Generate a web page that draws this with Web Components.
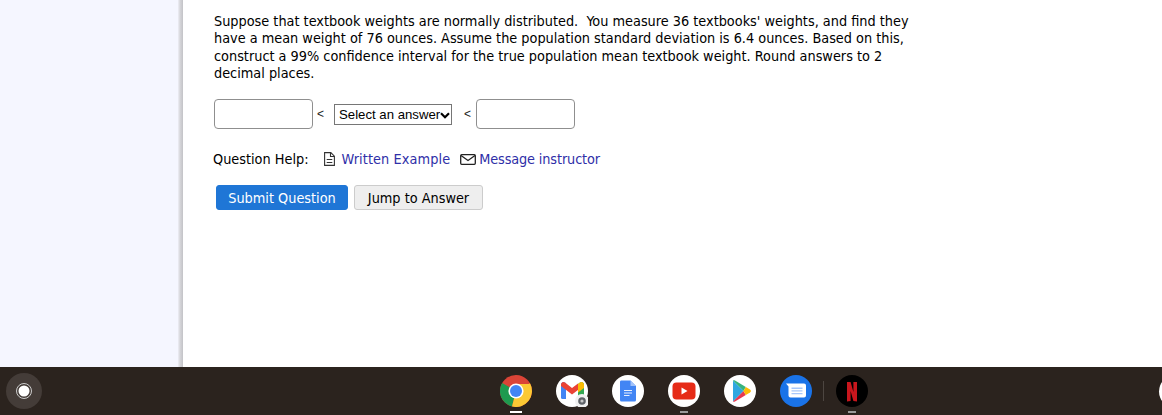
<!DOCTYPE html>
<html lang="en">
<head>
<meta charset="utf-8">
<title>Question</title>
<style>
  html, body { margin: 0; height: 100%; overflow: hidden; }
  body { font-family: "DejaVu Sans", sans-serif; font-stretch: condensed; }
</style>
</head>
<body>
<app-shell>
  <question-panel slot="main">
    <span slot="text">Suppose that textbook weights are normally distributed.&nbsp; You measure 36 textbooks' weights, and find they have a mean weight of 76 ounces. Assume the population standard deviation is 6.4 ounces. Based on this, construct a 99% confidence interval for the true population mean textbook weight. Round answers to 2 decimal places.</span>
  </question-panel>
  <shelf-bar slot="shelf"></shelf-bar>
</app-shell>

<script>
const shellTemplate = document.createElement('template')
shellTemplate.innerHTML = `
<style>
  :host { display: grid; grid-template-rows: 367px 48px; height: 415px; width: 100%; }
  #top { display: grid; grid-template-columns: 178px 5px 1fr; min-height: 0; }
  #side { background: #f5f6ff; }
  #edge { background: linear-gradient(to right, #eeeef6, #d6d6da 40%, #c6c6ca 90%); }
  #content { background: #fff; min-width: 0; }
</style>
<div id="top">
  <div id="side"></div>
  <div id="edge"></div>
  <div id="content"><slot name="main"></slot></div>
</div>
<slot name="shelf"></slot>
`
customElements.define('app-shell', class extends HTMLElement {
  constructor () {
    super()
    this.attachShadow({ mode: 'open' }).appendChild(shellTemplate.content.cloneNode(true))
  }
})

const panelTemplate = document.createElement('template')
panelTemplate.innerHTML = `
<style>
  :host { display: block; padding: 13px 0 0 31px; color: #000; font-size: 14.33px; }
  #text { width: 700px; line-height: 17.3px; }
  #answer { display: flex; align-items: center; margin-top: 17px; font: 12px "Liberation Sans", sans-serif; }
  input {
    box-sizing: border-box; width: 99px; height: 30px; padding: 0 4px; margin: 0;
    border: 1px solid #8f8f8f; border-radius: 4px; background: #fff;
  }
  #pick { position: relative; display: block; width: 118px; height: 21px; }
  select {
    display: block; box-sizing: border-box; width: 118px; height: 21px; margin: 0; padding: 0 0 0 4px;
    font: 13.2px "Liberation Sans", Arial, sans-serif; color: #000;
    background: #fff; border: 1px solid #767676; border-radius: 0; appearance: none;
  }
  #pick svg { position: absolute; left: 106px; top: 8px; pointer-events: none; }
  .lt { box-sizing: border-box; width: 21px; padding-left: 4px; color: #222; }
  .lt.second { width: 24px; padding-left: 12px; }
  #help { display: flex; align-items: center; margin: 21px 0 0 -1px; height: 18px; }
  #help b { font-weight: normal; margin-right: 15px; }
  a { color: #2f2fa8; text-decoration: none; display: flex; align-items: center; }
  #written { margin-right: 10px; letter-spacing: .1px; }
  #written svg { margin-right: 7px; }
  #message { letter-spacing: -.12px; }
  #message svg { margin-right: 3px; }
  #buttons { display: flex; gap: 6px; margin: 17px 0 0 2px; }
  button {
    box-sizing: border-box; height: 25px; margin: 0; padding: 0; border-radius: 3px;
    font: inherit; font-size: 14.33px; font-stretch: condensed;
  }
  #submit { width: 132px; background: #1f76d6; color: #fff; border: 1px solid #1f76d6; }
  #jump { width: 129px; background: #eee; color: #000; border: 1px solid #ccc; }
</style>
<div id="text"><slot name="text"></slot></div>
<div id="answer">
  <input type="text" aria-label="Lower bound">
  <span class="lt">&lt;</span>
  <span id="pick">
    <select aria-label="Parameter"><option>Select an answer</option></select>
    <svg width="10" height="7" viewBox="0 0 10 7" fill="none" stroke="#000" stroke-width="2.2"><path d="M1 1.200l4 4 4-4"/></svg>
  </span>
  <span class="lt second">&lt;</span>
  <input type="text" aria-label="Upper bound">
</div>
<div id="help">
  <b>Question Help:</b>
  <a id="written" href="#">
    <svg width="11" height="14" viewBox="0 0 11 14" fill="none" stroke="#333" stroke-width="1.100">
      <path d="M.6.6h6.200l3.600 3.600v9.200H.6z"/><path d="M6.500.6v3.900h3.900"/><path d="M2.700 7.500h5.600M2.700 10.500h5.600"/>
    </svg>Written Example</a>
  <a id="message" href="#">
    <svg width="16" height="11" viewBox="0 0 16 11" fill="none" stroke="#222" stroke-width="1.300">
      <rect x=".7" y=".7" width="14.600" height="9.600" rx="1"/><path d="M1 1.500l7 5 7-5"/>
    </svg>Message instructor</a>
</div>
<div id="buttons">
  <button id="submit">Submit Question</button>
  <button id="jump">Jump to Answer</button>
</div>
`
customElements.define('question-panel', class extends HTMLElement {
  constructor () {
    super()
    this.attachShadow({ mode: 'open' }).appendChild(panelTemplate.content.cloneNode(true))
  }
})

const shelfTemplate = document.createElement('template')
shelfTemplate.innerHTML = `
<style>
  :host { display: flex; align-items: center; position: relative; height: 48px; background: #2b231e; overflow: hidden; }
  #launcher {
    position: absolute; left: 6px; top: 6px; width: 36px; height: 36px; border-radius: 50%;
    background: #443c38; display: flex; align-items: center; justify-content: center;
  }
  #apps { display: flex; align-items: center; margin-left: 500px; height: 48px; }
  .app { position: relative; width: 32px; height: 32px; margin-right: 24px; flex: none; }
  .app svg { display: block; filter: blur(.3px); }
  .app::after {
    content: ""; position: absolute; left: 12px; bottom: -6px; width: 8px; height: 2px; background: #9a9a9a;
  }
  .app.plain::after { display: none; }
  .app.active::after { left: 10px; width: 12px; background: #fff; }
  #apps .tight { margin-right: 11px; }
  #divider { width: 1px; height: 20px; background: #4d4641; margin-right: 12px; flex: none; }
  #tray {
    position: absolute; right: -30px; top: 8px; width: 33px; height: 33px; border-radius: 50%; background: #fff;
  }
</style>
<div id="launcher">
  <svg width="16" height="16" viewBox="0 0 16 16">
    <circle cx="8" cy="8" r="7.500" fill="none" stroke="#ccc" stroke-width="1"/>
    <circle cx="8" cy="8" r="5.500" fill="#fff"/>
  </svg>
</div>
<div id="apps">
  <div class="app active">
    <svg width="32" height="32" viewBox="0 0 32 32">
      <circle cx="16" cy="16" r="16" fill="#db4437"/>
      <path d="M16 16L2.100 8A16 16 0 0 0 12 31.500z" fill="#1e9a4f"/>
      <path d="M16 16L30 8.300A16 16 0 0 1 12 31.500z" fill="#fcc934"/>
      <path d="M16 9h13.500l1 1.600-14.500 6z" fill="#fcc934"/>
      <circle cx="16" cy="16" r="7.600" fill="#fff"/>
      <circle cx="16" cy="16" r="6" fill="#4285f4"/>
    </svg>
  </div>
  <div class="app plain">
    <svg width="32" height="32" viewBox="0 0 32 32">
      <circle cx="16" cy="16" r="16" fill="#fff"/>
      <path d="M5 9.500A2.500 2.500 0 0 1 9 7.500l1 .8V24H6.600A1.600 1.600 0 0 1 5 22.400z" fill="#4285f4"/>
      <path d="M28 9.500a2.500 2.500 0 0 0-4-2l-2 1.500V24h4.400a1.600 1.600 0 0 0 1.600-1.600z" fill="#34a853"/>
      <path d="M22 9l2-1.500a2.500 2.500 0 0 1 4 2v3.500l-6 4.500z" fill="#fbbc04"/>
      <path d="M5 9.500A2.500 2.500 0 0 1 9 7.500l7 5.500 6-4.500v6.500l-6 4.500-11-8.500z" fill="#ea4335"/>
      <circle cx="26" cy="26" r="7" fill="#f1f1f1"/>
      <circle cx="26" cy="26" r="3.800" fill="#5f6368"/>
      <circle cx="26" cy="26" r="1.600" fill="#c8c8c8"/>
    </svg>
  </div>
  <div class="app plain">
    <svg width="32" height="32" viewBox="0 0 32 32">
      <circle cx="16" cy="16" r="16" fill="#fff"/>
      <path d="M9 5.500h9.500l5.500 5.500v14a1.500 1.500 0 0 1-1.500 1.500h-13A1.500 1.500 0 0 1 8 25V7a1.500 1.500 0 0 1 1-1.500z" fill="#4285f4"/>
      <path d="M18.500 5.500L24 11h-5.500z" fill="#a1c2fa"/>
      <path d="M12 15h8v1h-8zM12 17.500h8v1h-8zM12 20h5.500v1H12z" fill="#e8f0fe"/>
    </svg>
  </div>
  <div class="app">
    <svg width="32" height="32" viewBox="0 0 32 32">
      <circle cx="16" cy="16" r="16" fill="#fff"/>
      <rect x="4.500" y="7.500" width="23" height="17" rx="4" fill="#e62b17"/>
      <path d="M13.500 12.500v7l6-3.500z" fill="#fff"/>
    </svg>
  </div>
  <div class="app plain">
    <svg width="32" height="32" viewBox="0 0 32 32">
      <circle cx="16" cy="16" r="16" fill="#fff"/>
      <path d="M9 5.500v21L19.500 16z" fill="#2fa7e0"/>
      <path d="M9 5.500c.5-.4 1.200-.3 2 .1L21.800 12l-2.300 4z" fill="#36b37e"/>
      <path d="M9 26.500c.5.4 1.200.3 2-.1L21.800 20l-2.300-4z" fill="#e8384f"/>
      <path d="M21.800 12l4.200 2.500c1.200.8 1.200 2.200 0 3L21.800 20l-2.300-4z" fill="#fbbc04"/>
    </svg>
  </div>
  <div class="app plain tight">
    <svg width="32" height="32" viewBox="0 0 32 32">
      <circle cx="16" cy="16" r="16" fill="#1a73e8"/>
      <path d="M6 8.500h18a2 2 0 0 1 2 2v10a2 2 0 0 1-2 2H10.500a2 2 0 0 1-2-2v-9z" fill="#fff"/>
      <path d="M11.500 12.500h11v1.400h-11zM11.500 15.200h11v1.400h-11zM11.500 17.900h11v1.400h-11z" fill="#a8c7fa"/>
    </svg>
  </div>
  <div id="divider"></div>
  <div class="app">
    <svg width="32" height="32" viewBox="0 0 32 32">
      <circle cx="16" cy="16" r="16" fill="#000"/>
      <path d="M11 7h3.600L17.400 17V7H21v19.500q-1.800-.4-3.600-.5L14.600 16v10q-1.800.1-3.600.5z" fill="#c8161d"/>
    </svg>
  </div>
</div>
<div id="tray"></div>
`
customElements.define('shelf-bar', class extends HTMLElement {
  constructor () {
    super()
    this.attachShadow({ mode: 'open' }).appendChild(shelfTemplate.content.cloneNode(true))
  }
})
</script>
</body>
</html>
